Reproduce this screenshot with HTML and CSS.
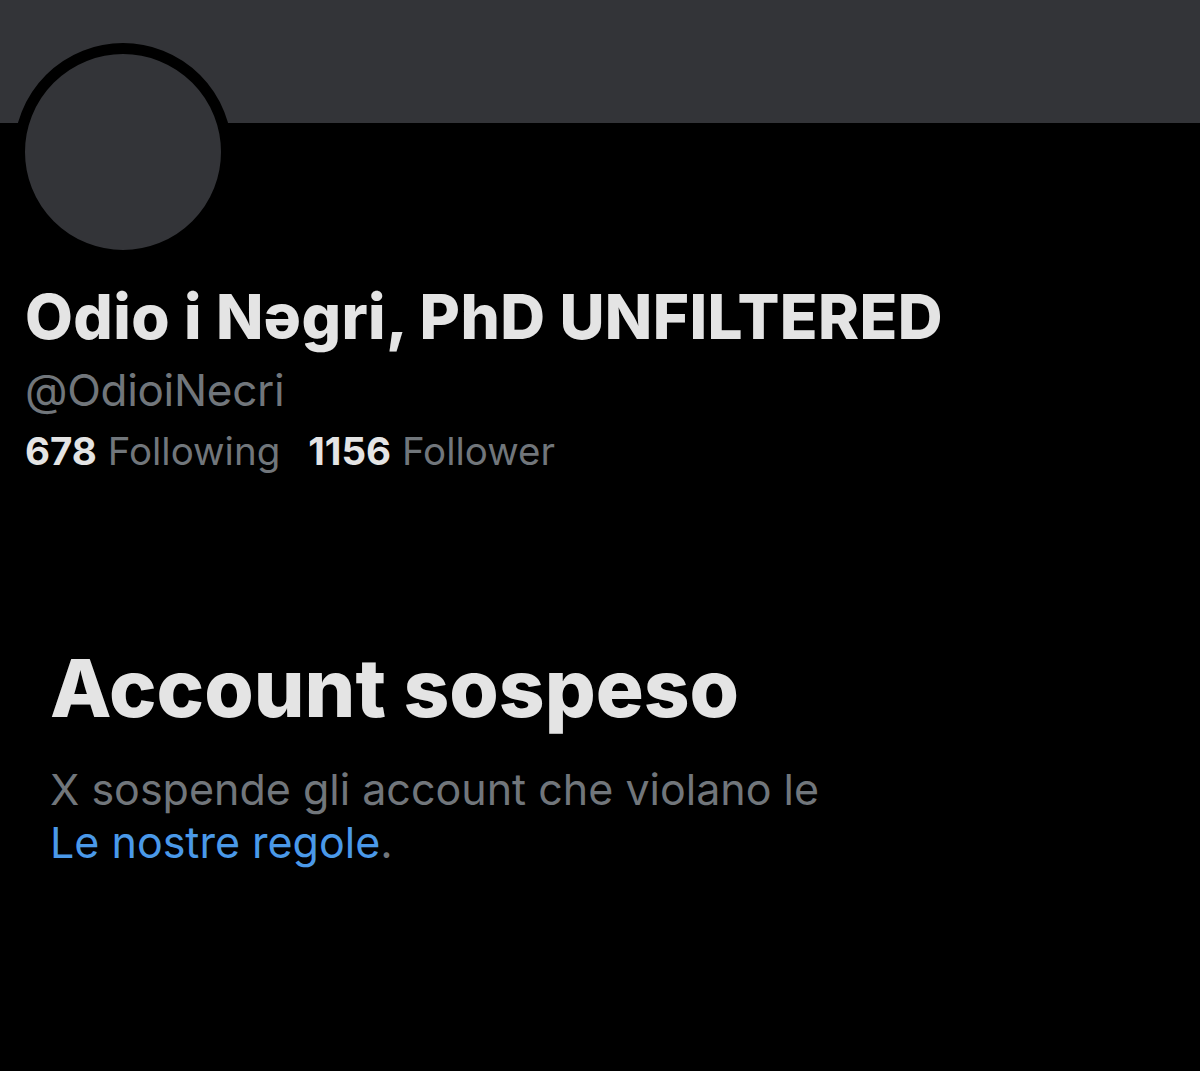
FILE: index.html
```html
<!DOCTYPE html>
<html lang="it">
<head>
  <meta charset="UTF-8" />
  <meta name="viewport" content="width=device-width, initial-scale=1.0" />
  <title>Account sospeso</title>
  <link rel="stylesheet" href="styles.css">
</head>
<body>
  <!-- Profile header -->
  <div class="banner"></div>
  <div class="profile">
    <div class="avatar"></div>
    <h1 class="name">Odio i Nəgri, PhD UNFILTERED</h1>
    <div class="handle">@OdioiNecri</div>
    <div class="stats">
      <span><b>678</b> Following</span>
      <span><b>1156</b> Follower</span>
    </div>
  </div>

  <!-- Suspended notice -->
  <div class="notice">
    <h2>Account sospeso</h2>
    <p>X sospende gli account che violano le<br><a href="#">Le nostre regole</a>.</p>
  </div>
</body>
</html>
```

FILE: styles.css
```css
/* Basic reset */
* {
  box-sizing: border-box;
  margin: 0;
  padding: 0;
}
body {
  background: #000;
  color: #e4e4e4;
  font-family: 'Inter', 'Liberation Sans', sans-serif;
  height: 100vh;
  overflow: hidden;
}
.banner {
  height: 123px;
  background: #333438;
}
.profile {
  padding: 0 25px;
}
.avatar {
  width: 218px;
  height: 218px;
  margin: -80px 0 0 -11px;
  border-radius: 50%;
  background: #333438;
  border: 11px solid #000;
}
.name {
  margin-top: 22px;
  font-size: 62px;
  font-weight: 800;
  letter-spacing: 0.4px;
  line-height: 68px;
}
.handle {
  margin-top: 11px;
  color: #71767b;
  font-size: 44px;
  line-height: 56px;
  letter-spacing: -0.3px;
}
.stats {
  display: flex;
  gap: 28px;
  margin-top: 7px;
  color: #71767b;
  font-size: 38.5px;
  line-height: 52px;
}
.stats b {
  color: #e4e4e4;
  font-weight: 700;
}
.notice {
  padding: 166px 50px 0;
}
.notice h2 {
  font-size: 80px;
  font-weight: 800;
  line-height: 90px;
}
.notice p {
  margin-top: 30px;
  color: #71767b;
  font-size: 43px;
  line-height: 53px;
}
.notice a {
  color: #4a99e9;
  text-decoration: none;
}
```
